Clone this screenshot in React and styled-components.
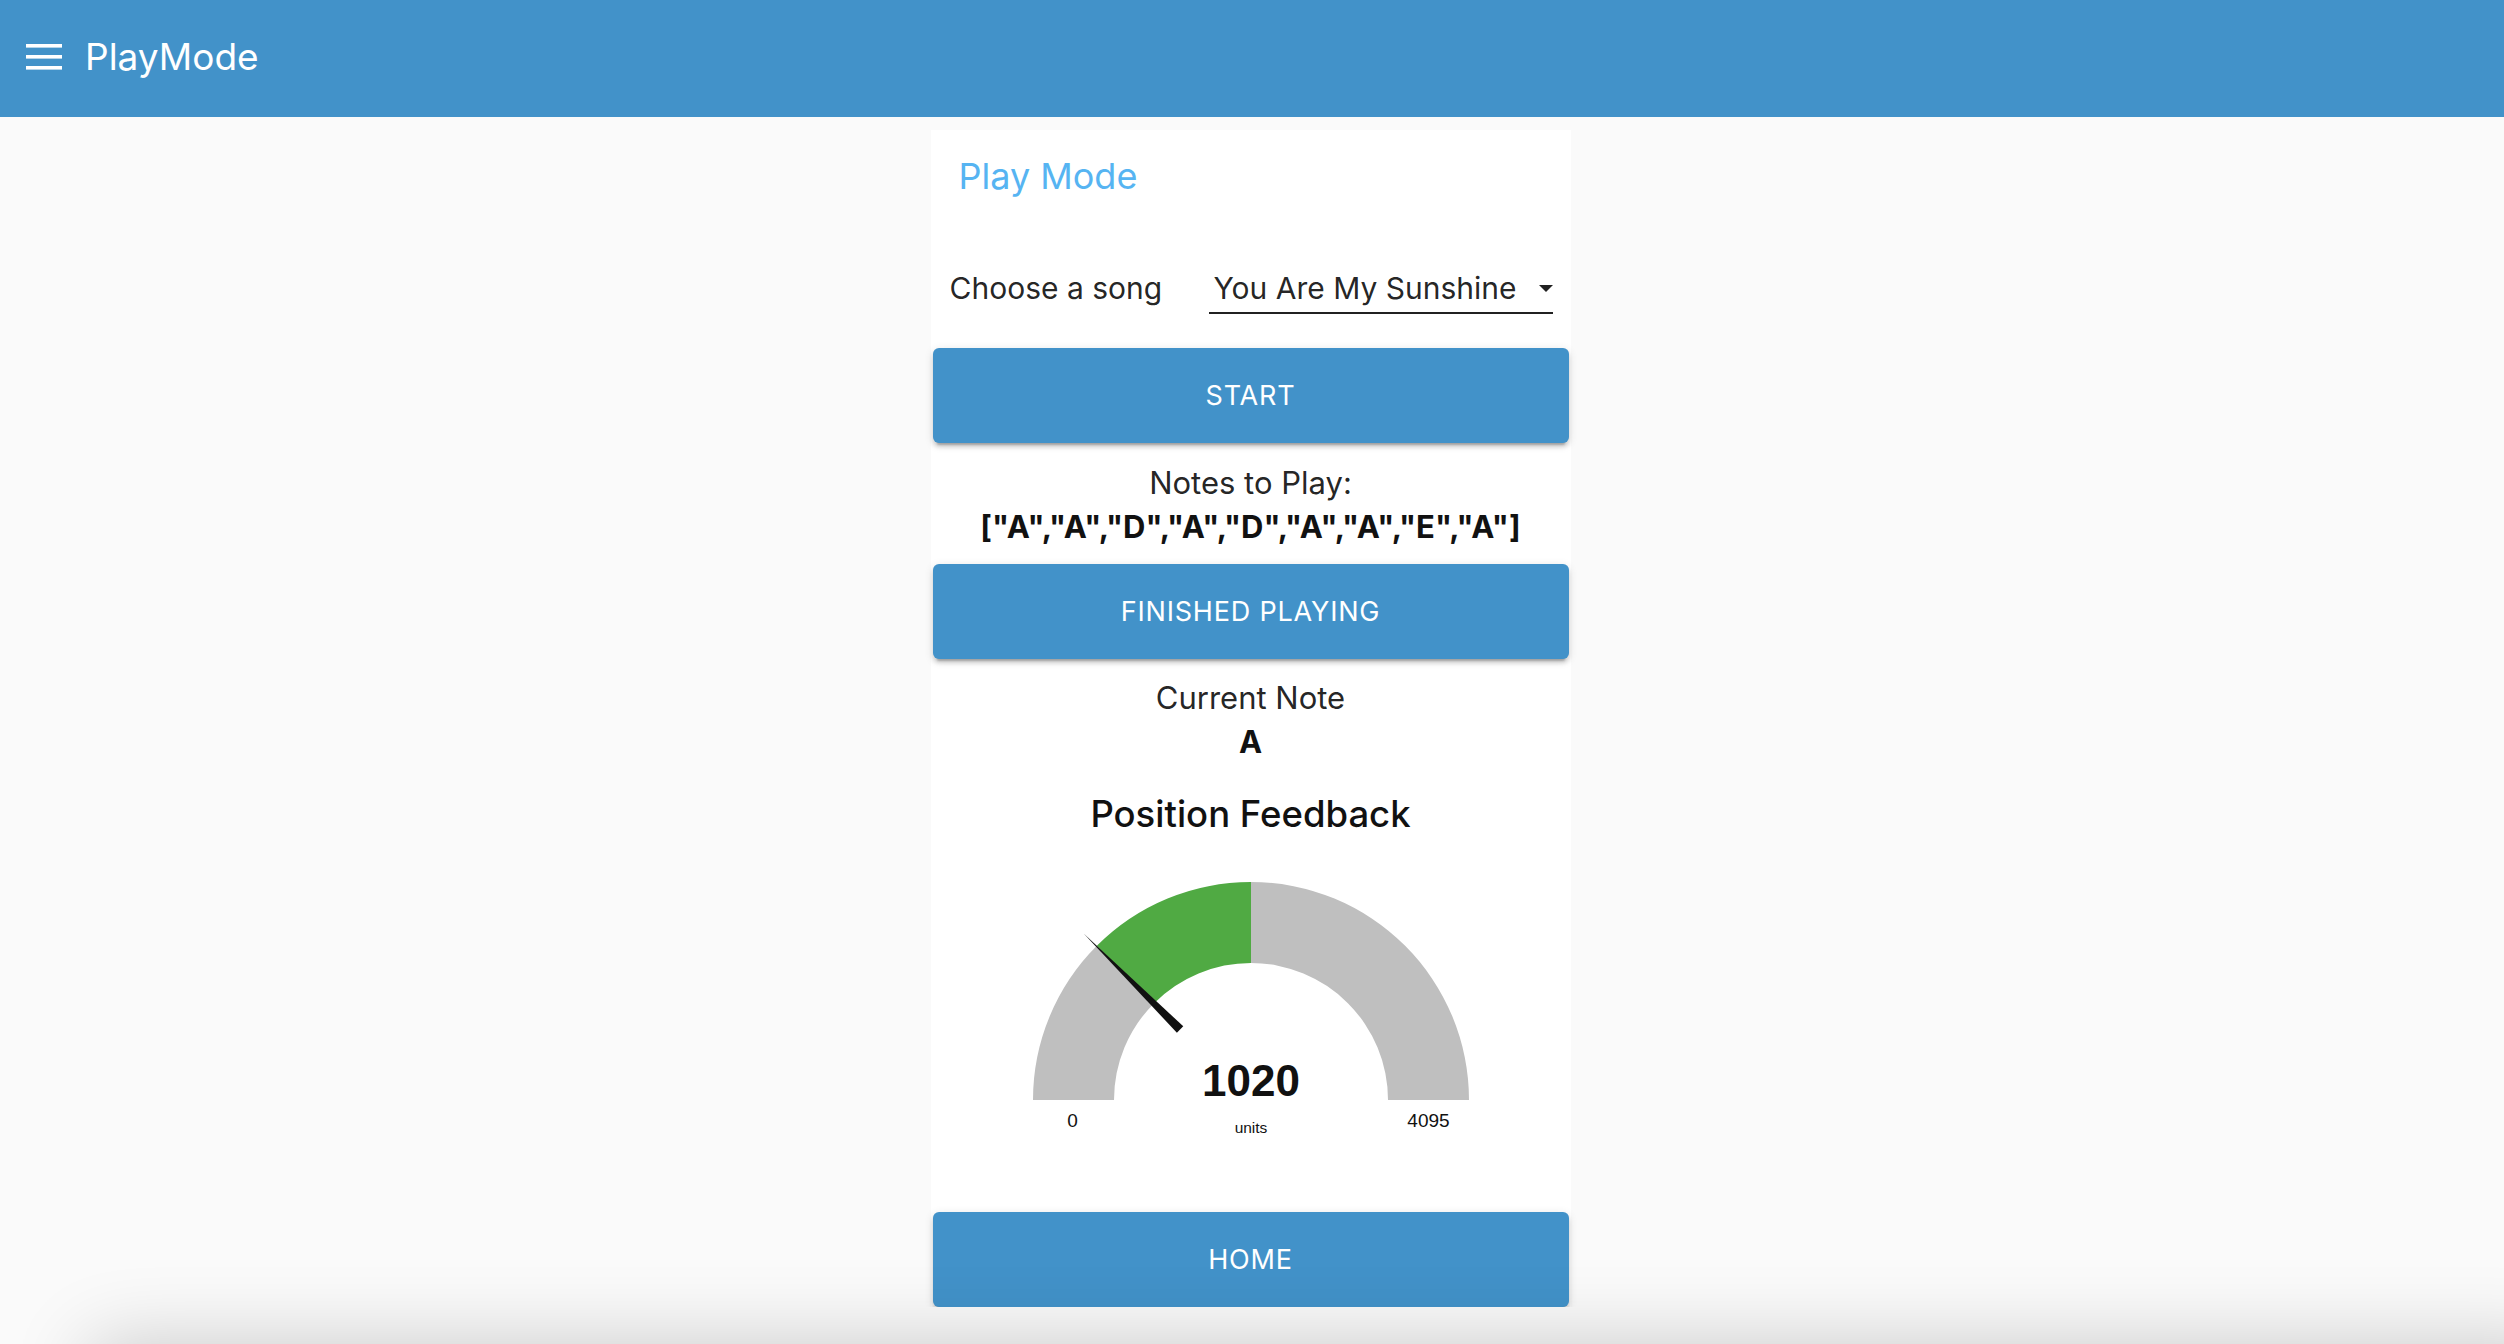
import styled, { createGlobalStyle } from "styled-components";

const GlobalStyle = createGlobalStyle`
  body {
    margin: 0;
    background: #fafafa;
    font-family: Inter, "Noto Sans", sans-serif;
    color: rgba(0, 0, 0, 0.87);
  }
`;

const notes = ["A", "A", "D", "A", "D", "A", "A", "E", "A"];

// gauge geometry
const CX = 250;
const CY = 230;
const R_OUT = 218;
const R_IN = 137;
const MAX = 4095;
const VALUE = 1020;

function pt(r, deg) {
  const a = (deg * Math.PI) / 180;
  return [CX - r * Math.cos(a), CY - r * Math.sin(a)];
}

function sector(from, to) {
  const [x1, y1] = pt(R_OUT, from);
  const [x2, y2] = pt(R_OUT, to);
  const [x3, y3] = pt(R_IN, to);
  const [x4, y4] = pt(R_IN, from);
  return `M${x1} ${y1} A${R_OUT} ${R_OUT} 0 0 1 ${x2} ${y2} L${x3} ${y3} A${R_IN} ${R_IN} 0 0 0 ${x4} ${y4} Z`;
}

function needle(value) {
  const deg = (value / MAX) * 180;
  const a = (deg * Math.PI) / 180;
  const ux = -Math.cos(a);
  const uy = -Math.sin(a);
  const px = -uy;
  const py = ux;
  const bx = CX + ux * 100;
  const by = CY + uy * 100;
  const tx = CX + ux * 236;
  const ty = CY + uy * 236;
  const w = 4.5;
  return `${bx + px * w},${by + py * w} ${tx},${ty} ${bx - px * w},${by - py * w}`;
}

function Gauge() {
  return (
    <GaugeSvg width="500" height="270" viewBox="0 0 500 270">
      <path d={sector(0, 45)} fill="#bfbfbf" />
      <path d={sector(45, 90)} fill="#50aa43" />
      <path d={sector(90, 180)} fill="#bfbfbf" />
      <polygon points={needle(VALUE)} fill="#111" />
      <GaugeValue x={CX} y="226" textAnchor="middle">
        {VALUE}
      </GaugeValue>
      <GaugeLabel x="71.5" y="257" textAnchor="middle">
        0
      </GaugeLabel>
      <GaugeUnits x={CX} y="263" textAnchor="middle">
        units
      </GaugeUnits>
      <GaugeLabel x="427.5" y="257" textAnchor="middle">
        {MAX}
      </GaugeLabel>
    </GaugeSvg>
  );
}

export default function App() {
  return (
    <>
      <GlobalStyle />
      <AppBar>
        <svg width="36" height="26" viewBox="0 0 36 26">
          <rect x="0" y="0" width="36" height="3.6" fill="#fff" />
          <rect x="0" y="11" width="36" height="3.6" fill="#fff" />
          <rect x="0" y="22" width="36" height="3.6" fill="#fff" />
        </svg>
        <AppTitle>PlayMode</AppTitle>
      </AppBar>
      <Main>
        <Card>
          <Heading>Play Mode</Heading>
          <SongRow>
            <Label>Choose a song</Label>
            <Select>
              <span>You Are My Sunshine</span>
              <svg width="14" height="7" viewBox="0 0 14 7">
                <polygon points="0,0 14,0 7,7" fill="rgba(0,0,0,0.87)" />
              </svg>
            </Select>
          </SongRow>
          <Button $top={34}>Start</Button>
          <InfoBlock $top={18}>
            <div>Notes to Play:</div>
            <strong>{JSON.stringify(notes)}</strong>
          </InfoBlock>
          <Button $top={15}>Finished Playing</Button>
          <InfoBlock $top={17}>
            <div>Current Note</div>
            <strong>A</strong>
          </InfoBlock>
          <SubHeading>Position Feedback</SubHeading>
          <Gauge />
          <Button $top={72}>Home</Button>
        </Card>
      </Main>
      <BottomShade />
    </>
  );
}

const AppBar = styled.header`
  height: 117px;
  box-sizing: border-box;
  display: flex;
  align-items: center;
  gap: 23px;
  padding: 0 0 4px 26px;
  background: #4292c9;
  color: #fff;
`;

const AppTitle = styled.h1`
  margin: 0;
  font-size: 37px;
  font-weight: 400;
`;

const Main = styled.main`
  display: flex;
  justify-content: center;
  padding: 13px 3px 0 0;
`;

const Card = styled.section`
  width: 640px;
  box-sizing: border-box;
  display: flex;
  flex-direction: column;
  padding: 0 2px;
  background: #fff;
`;

const Heading = styled.h2`
  margin: 24px 0 0 26px;
  font-size: 36px;
  line-height: 44px;
  font-weight: 400;
  color: #56b4f2;
`;

const SongRow = styled.div`
  display: flex;
  align-items: baseline;
  justify-content: space-between;
  margin-top: 72px;
  padding: 0 16px 0 17px;
`;

const Label = styled.span`
  font-size: 30px;
  line-height: 36px;
`;

const Select = styled.div`
  width: 344px;
  box-sizing: border-box;
  display: flex;
  align-items: center;
  justify-content: space-between;
  padding: 0 0 6px 5px;
  border-bottom: 2px solid rgba(0, 0, 0, 0.87);
  font-size: 30px;
  line-height: 36px;
`;

const Button = styled.button`
  margin-top: ${(p) => p.$top}px;
  height: 95px;
  width: 100%;
  border: none;
  border-radius: 6px;
  background: #4292c9;
  color: #fff;
  font-family: Inter, "Noto Sans", sans-serif;
  font-size: 27px;
  font-weight: 400;
  letter-spacing: 0.03em;
  text-transform: uppercase;
  box-shadow: 0 6px 2px -4px rgba(0, 0, 0, 0.2), 0 4px 4px 0 rgba(0, 0, 0, 0.14),
    0 2px 10px 0 rgba(0, 0, 0, 0.12);
`;

const InfoBlock = styled.div`
  margin-top: ${(p) => p.$top}px;
  text-align: center;
  font-size: 31px;
  line-height: 44px;

  strong {
    display: block;
    font-weight: 700;
    color: #111;
  }
`;

const SubHeading = styled.h3`
  margin: 28px 0 0;
  text-align: center;
  font-size: 36.5px;
  line-height: 44px;
  font-weight: 500;
  color: #111;
`;

const GaugeSvg = styled.svg`
  display: block;
  align-self: center;
  margin-top: 34px;
`;

const GaugeValue = styled.text`
  font-family: "Liberation Sans", Arial, sans-serif;
  font-size: 44px;
  font-weight: 700;
  fill: #111;
`;

const GaugeLabel = styled.text`
  font-family: "Liberation Sans", Arial, sans-serif;
  font-size: 19px;
  fill: #111;
`;

const GaugeUnits = styled(GaugeLabel)`
  font-size: 15.5px;
`;

const BottomShade = styled.div`
  position: fixed;
  left: 90px;
  right: -60px;
  bottom: -100px;
  height: 100px;
  box-shadow: 0 0 80px rgba(0, 0, 0, 0.2);
  background: #fafafa;
`;
